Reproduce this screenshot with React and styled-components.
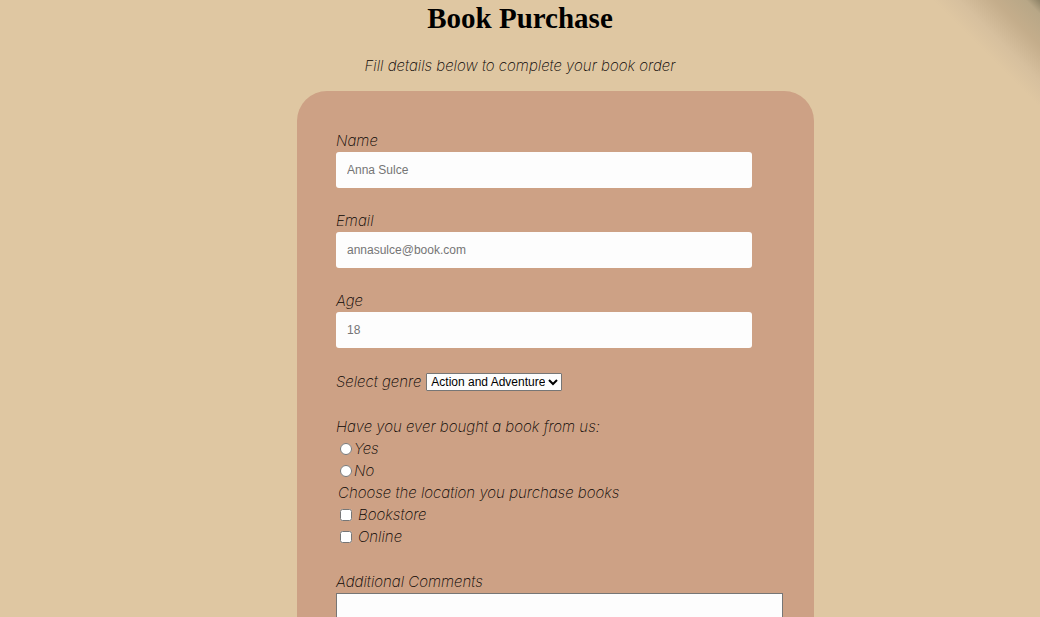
import React from "react";
import styled, { createGlobalStyle } from "styled-components";

const GlobalStyle = createGlobalStyle`
  *, *::before, *::after { box-sizing: border-box; }
  body {
    margin: 0;
    background: #dfc7a2;
    color: #080402;
    font-family: Inter, sans-serif;
    font-size: 15px;
    font-weight: 200;
    font-style: italic;
    line-height: 22px;
  }
`;

const Page = styled.main`
  display: flex;
  flex-direction: column;
  align-items: center;
  min-height: 100vh;
  padding-bottom: 40px;
  background: linear-gradient(225deg, #8d8266 0, #b8a787 10px, #c4ad8b 32px, #d7c09e 58px, #dfc7a2 76px);
`;

const Title = styled.h1`
  margin: 2px 0 0;
  color: #000;
  font: bold 29px/32px "Liberation Serif", serif;
`;

const Intro = styled.p`
  margin: 21px 0 0;
  font-size: 15px;
`;

const CardArea = styled.div`
  display: flex;
  justify-content: center;
  width: 100%;
  margin-top: 14px;
  padding-left: 71px;
`;

const Card = styled.form`
  display: flex;
  flex-direction: column;
  gap: 23px;
  width: 100%;
  max-width: 517px;
  padding: 39px 31px 39px 39px;
  border-radius: 30px;
  background: #cda185;
`;

const Fields = styled.div`
  display: flex;
  flex-direction: column;
  gap: 22px;
`;

const Field = styled.div`
  display: flex;
  flex-direction: column;
  align-items: flex-start;
`;

const Input = styled.input`
  width: 100%;
  max-width: 416px;
  height: 36px;
  padding: 0 11px;
  border: 0;
  border-radius: 3px;
  background: #fdfdfd;
  font: 12px "Liberation Sans", sans-serif;
  &::placeholder { color: #757575; }
`;

const SelectRow = styled.div`
  display: flex;
  align-items: center;
  gap: 5px;
  padding-top: 1px;
`;

const Select = styled.select`
  height: 18px;
  width: 136px;
  padding: 0;
  border: 1px solid #767676;
  border-radius: 1px;
  background: #fdfdfd;
  color: #000;
  font: 12px "Liberation Sans", sans-serif;
`;

const Group = styled.fieldset`
  min-width: 0;
  margin: 0;
  padding: 0;
  border: 0;
`;

const Legend = styled.legend`
  padding: 0 0 0 ${(p) => (p.$inset ? "2px" : "0")};
`;

const Option = styled.label`
  display: flex;
  align-items: center;
  gap: ${(p) => (p.$wide ? "6px" : "2px")};
  padding-left: 4px;
`;

const Tick = styled.input`
  width: 12px;
  height: 12px;
  margin: 0;
`;

const Comments = styled.textarea`
  display: block;
  width: 100%;
  height: 100px;
  padding: 10px;
  border: 1px solid #767676;
  background: #fdfdfd;
  font: 12px "Liberation Sans", sans-serif;
  resize: none;
`;

const textFields = [
  { id: "name", label: "Name", type: "text", placeholder: "Anna Sulce" },
  { id: "email", label: "Email", type: "email", placeholder: "annasulce@book.com" },
  { id: "age", label: "Age", type: "number", placeholder: "18" },
];

export default function App() {
  return (
    <>
      <GlobalStyle />
      <Page>
        <Title>Book Purchase</Title>
        <Intro>Fill details below to complete your book order</Intro>
        <CardArea>
          <Card>
            <Fields>
              {textFields.map((f) => (
                <Field key={f.id}>
                  <label htmlFor={f.id}>{f.label}</label>
                  <Input id={f.id} type={f.type} placeholder={f.placeholder} />
                </Field>
              ))}
              <SelectRow>
                <label htmlFor="genre">Select genre</label>
                <Select id="genre">
                  <option>Action and Adventure</option>
                </Select>
              </SelectRow>
            </Fields>
            <div>
              <Group>
                <Legend>Have you ever bought a book from us:</Legend>
                <Option><Tick type="radio" name="bought" value="yes" />Yes</Option>
                <Option><Tick type="radio" name="bought" value="no" />No</Option>
              </Group>
              <Group>
                <Legend $inset>Choose the location you purchase books</Legend>
                <Option $wide><Tick type="checkbox" name="location" value="bookstore" />Bookstore</Option>
                <Option $wide><Tick type="checkbox" name="location" value="online" />Online</Option>
              </Group>
            </div>
            <Field>
              <label htmlFor="comments">Additional Comments</label>
              <Comments id="comments" />
            </Field>
          </Card>
        </CardArea>
      </Page>
    </>
  );
}
